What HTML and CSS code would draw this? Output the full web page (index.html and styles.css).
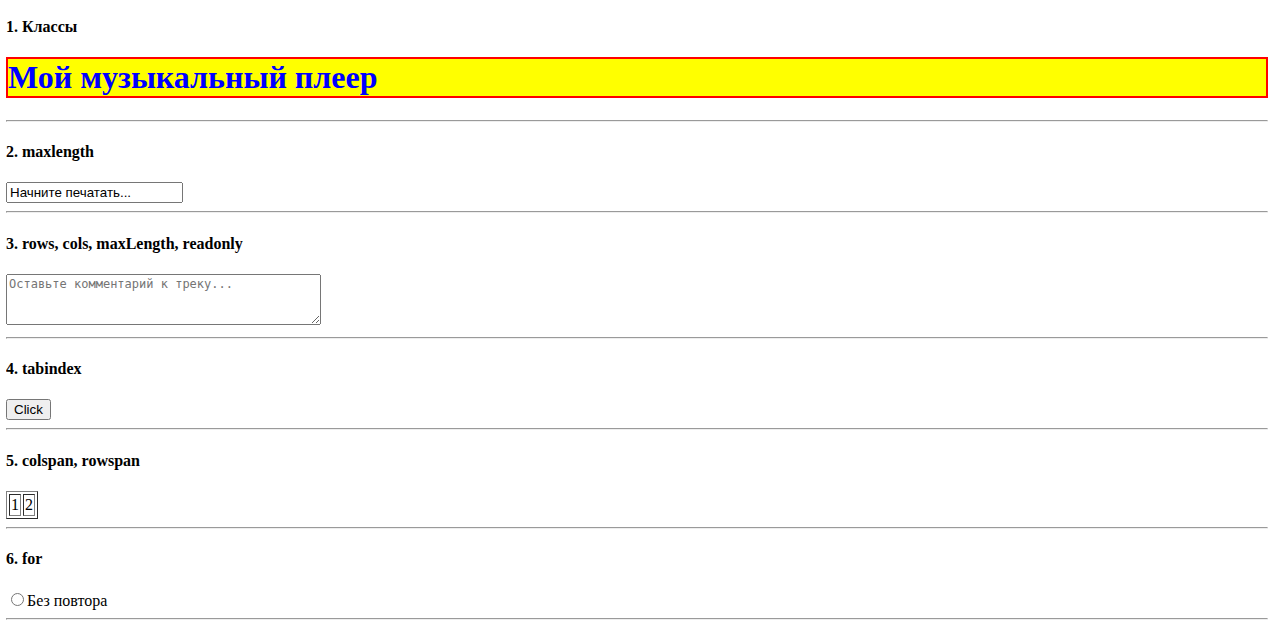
FILE: index.html
```html
<!DOCTYPE html>
<html>
<head>
<meta charset="utf-8">
<link rel="stylesheet" href="styles.css">
</head>
<body>
<h4 class="first">1. Классы</h4>
<h1 class="title">Мой музыкальный плеер</h1>
<hr>
<h4>2. maxlength</h4>
<input type="text" class="field" value="Начните печатать..." maxlength="20">
<hr>
<h4>3. rows, cols, maxLength, readonly</h4>
<textarea class="comment" rows="3" cols="40" placeholder="Оставьте комментарий к треку..."></textarea>
<hr>
<h4>4. tabindex</h4>
<button class="btn" tabindex="1">Click</button>
<hr>
<h4>5. colspan, rowspan</h4>
<table class="grid" border="1"><tr><td>1</td><td>2</td></tr></table>
<hr>
<h4>6. for</h4>
<input type="radio" id="norepeat" name="repeat"><label for="norepeat">Без повтора</label>
<hr>
</body>
</html>
```
FILE: styles.css
```css
body {
  font-family: "Liberation Serif", serif;
  margin: 18px 4px 8px 6px;
}
.first {
  margin-top: 0;
}
.title {
  background: yellow;
  color: blue;
  border: 2px solid red;
}
.field, .btn {
  font-family: "Liberation Sans", sans-serif;
}
.field {
  box-sizing: border-box;
  width: 177px;
}
.comment {
  font-family: "DejaVu Sans Mono", monospace;
  font-size: 12px;
  box-sizing: border-box;
  width: 315px;
  height: 51px;
}
```
